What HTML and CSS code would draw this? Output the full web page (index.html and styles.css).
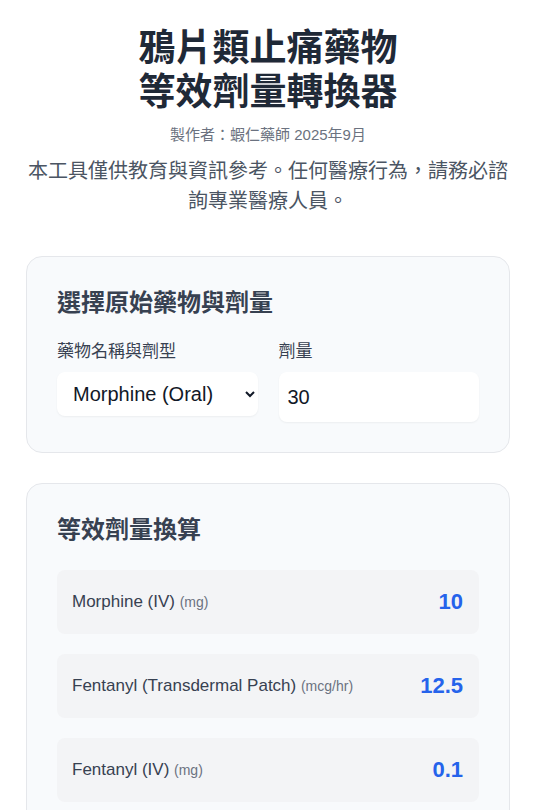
FILE: index.html
```html
<!doctype html>
<html lang="zh-TW">
  <head>
    <meta charset="utf-8">
    <title>鴉片類止痛藥物等效劑量轉換器</title>
    <link rel="stylesheet" href="styles.css">
  </head>

  <body>
    <div class="container">

      <header class="page-header">
        <h1>鴉片類止痛藥物<br>等效劑量轉換器</h1>
        <p class="author">製作者：蝦仁藥師 2025年9月</p>
        <p class="notice">本工具僅供教育與資訊參考。任何醫療行為，請務必諮詢專業醫療人員。</p>
      </header>

      <!-- 輸入區 -->
      <section class="card">
        <h2>選擇原始藥物與劑量</h2>
        <div class="form-grid">
          <div class="field">
            <label for="drug">藥物名稱與劑型</label>
            <select id="drug" class="drug-select">
              <option>Morphine (Oral)</option>
              <option>Morphine (IV)</option>
              <option>Fentanyl (Transdermal Patch)</option>
              <option>Fentanyl (IV)</option>
            </select>
          </div>
          <div class="field">
            <label for="dose">劑量</label>
            <input type="text" id="dose" class="dose-input" value="30">
          </div>
        </div>
      </section>

      <!-- 換算結果 -->
      <section class="card">
        <h2 class="results-title">等效劑量換算</h2>
        <ul class="result-list">
          <li class="result-row">
            <span class="result-name">Morphine (IV) <span class="unit">(mg)</span></span>
            <span class="result-value">10</span>
          </li>
          <li class="result-row">
            <span class="result-name">Fentanyl (Transdermal Patch) <span class="unit">(mcg/hr)</span></span>
            <span class="result-value">12.5</span>
          </li>
          <li class="result-row">
            <span class="result-name">Fentanyl (IV) <span class="unit">(mg)</span></span>
            <span class="result-value">0.1</span>
          </li>
        </ul>
      </section>

    </div>
  </body>
</html>
```

FILE: styles.css
```css
body {
  margin: 0;
  background-color: #fff;
  color: #1f2937;
  font-family: "Liberation Sans", Arial, "Noto Sans CJK TC", sans-serif;
}
.container {
  padding: 27px 24px 40px 26px;
}
/* 標題區 */
.page-header {
  text-align: center;
  margin-bottom: 40px;
}
.page-header h1 {
  margin: 0;
  font-size: 37px;
  line-height: 44px;
  font-weight: 700;
  color: #1f2937;
}
.author {
  margin: 10px 0 0;
  font-size: 15px;
  line-height: 20px;
  color: #6b7280;
}
.notice {
  margin: 11px 0 0;
  font-size: 20px;
  line-height: 30px;
  color: #4b5563;
}
/* 卡片 */
.card {
  background-color: #f8fafc;
  border: 1px solid #e5e7eb;
  border-radius: 16px;
  padding: 30px;
  margin-bottom: 30px;
}
.card h2 {
  margin: 0 0 21px;
  font-size: 24px;
  line-height: 32px;
  font-weight: 700;
  color: #374151;
}
.card .results-title {
  margin-bottom: 24px;
}
.form-grid {
  display: grid;
  grid-template-columns: 1fr 1fr;
  gap: 21px;
  align-items: start;
}
.field label {
  display: block;
  margin-bottom: 8px;
  font-size: 17px;
  line-height: 24px;
  color: #374151;
}
.drug-select {
  display: block;
  width: 100%;
  height: 44px;
  padding: 0 10px 0 12px;
  border: 0;
  border-radius: 8px;
  background-color: #fff;
  box-shadow: 0 1px 2px rgba(0, 0, 0, 0.05);
  font-family: inherit;
  font-size: 20px;
  color: #111827;
}
.dose-input {
  display: block;
  box-sizing: border-box;
  width: 100%;
  height: 50px;
  padding: 0 9px;
  border: 0;
  border-radius: 8px;
  background-color: #fff;
  box-shadow: 0 1px 2px rgba(0, 0, 0, 0.05);
  font-family: inherit;
  font-size: 20px;
  color: #111827;
}
/* 結果列表 */
.result-list {
  margin: 0;
  padding: 0;
  list-style-type: none;
  display: flex;
  flex-direction: column;
  gap: 20px;
}
.result-row {
  display: flex;
  justify-content: space-between;
  align-items: center;
  padding: 16px 16px 16px 15px;
  border-radius: 8px;
  background-color: #f3f4f6;
}
.result-name {
  font-size: 17px;
  color: #374151;
}
.unit {
  font-size: 14px;
  color: #6b7280;
}
.result-value {
  font-size: 22px;
  line-height: 32px;
  font-weight: 700;
  color: #2563eb;
}
```
